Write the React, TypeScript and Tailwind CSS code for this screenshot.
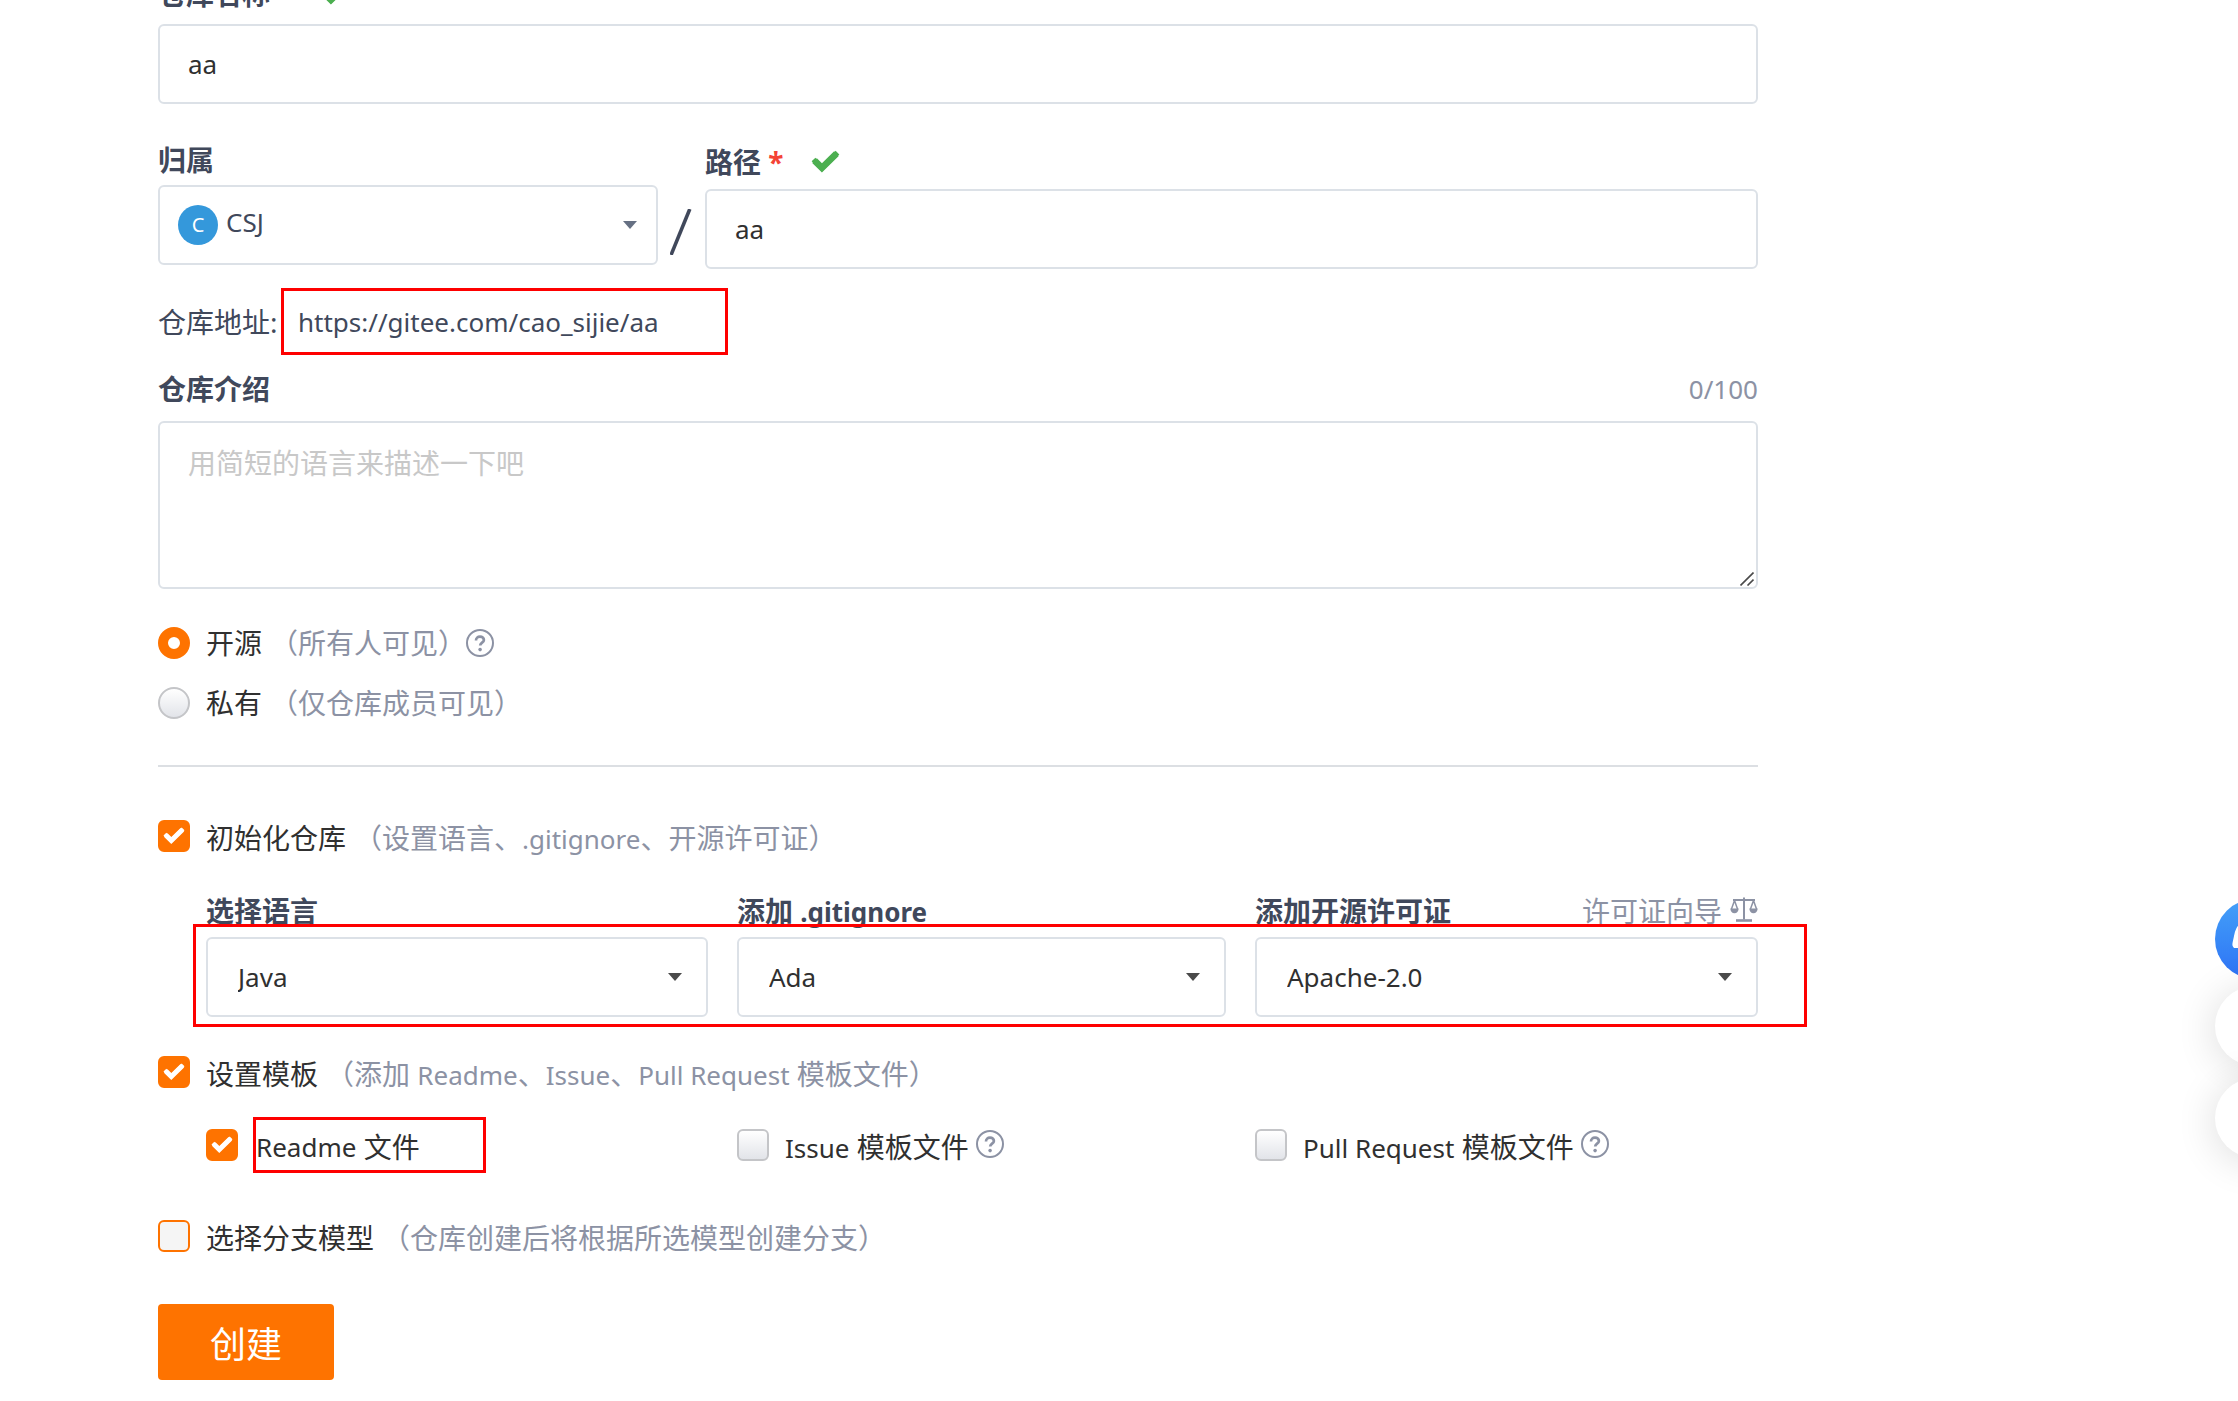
import { useState, type ReactNode } from "react";

function Latin({ children }: { children: ReactNode }) {
  return <span className="text-[26px]">{children}</span>;
}

function Tick({ className }: { className: string }) {
  return (
    <svg viewBox="0 0 22 18" className={`pointer-events-none shrink-0 ${className}`} fill="none" aria-hidden="true">
      <path d="M1.900 7.100 8.300 13.500 20.100 1.900" stroke="currentColor" strokeWidth="4" />
      <path d="M2.700 7.900 8.300 13.500 19.300 2.700" stroke="currentColor" strokeWidth="5" strokeLinecap="butt" />
    </svg>
  );
}

function HelpIcon({ className = "" }: { className?: string }) {
  return (
    <svg viewBox="0 0 28 28" className={`size-7 shrink-0 ${className}`} fill="none" stroke="#8c92a4" aria-hidden="true">
      <circle cx="14" cy="14" r="13" strokeWidth="2" />
      <path d="M10 11.400c0-2.200 1.700-3.700 4-3.700s3.900 1.400 3.900 3.200c0 2.700-3.700 2.800-3.700 5.600" strokeWidth="2.700" />
      <circle cx="14.100" cy="20.600" r="1.800" fill="#8c92a4" stroke="none" />
    </svg>
  );
}

function ScaleIcon() {
  return (
    <svg viewBox="0 0 28 26" className="h-[26px] w-7 shrink-0" fill="none" stroke="#8c92a4" strokeWidth="2" aria-hidden="true">
      <path d="M3 3h22M14 .5v22" />
      <path d="M6 23.500h16" strokeWidth="2.600" />
      <path d="M4.500 3.500 1.300 12.500M4.500 3.500 7.700 12.500M23.500 3.500 20.300 12.500M23.500 3.500 26.700 12.500" strokeWidth="1.500" />
      <path d="M.4 11.500h8.200c0 2.800-1.800 4.800-4.100 4.800S.4 14.300.4 11.500zM19.400 11.500h8.200c0 2.800-1.800 4.800-4.100 4.800s-4.100-2-4.100-4.800z" fill="#8c92a4" stroke="none" />
    </svg>
  );
}

function Caret({ className }: { className: string }) {
  return (
    <svg viewBox="0 0 14 8" className={`pointer-events-none absolute top-1/2 h-2 w-3.5 -translate-y-1/2 ${className}`} aria-hidden="true">
      <path d="M0 0h14L7 8z" fill="currentColor" />
    </svg>
  );
}

function Check({ id, checked = false, accent = false }: { id: string; checked?: boolean; accent?: boolean }) {
  const [on, setOn] = useState(checked);
  const off = accent ? "border-[#fe7300] bg-[#f5f5f5]" : "border-[#c4c5c8] bg-linear-to-b from-white to-[#e2e4e9]";
  return (
    <span className="relative flex size-8 shrink-0">
      <input
        id={id}
        type="checkbox"
        checked={on}
        onChange={(e) => setOn(e.target.checked)}
        className={`size-8 appearance-none rounded-md border-2 ${on ? "border-[#fe7300] bg-[#fe7300]" : off}`}
      />
      {on && <Tick className="absolute top-[7px] left-[5px] h-[18px] w-[22px] text-white" />}
    </span>
  );
}

function Radio({ id, checked, onChange }: { id: string; checked: boolean; onChange: () => void }) {
  return (
    <input
      id={id}
      type="radio"
      name="visibility"
      checked={checked}
      onChange={onChange}
      className={`size-8 shrink-0 appearance-none rounded-full ${
        checked ? "border-10 border-[#fe7300] bg-white" : "border-2 border-[#c4c5c8] bg-linear-to-b from-white to-[#e2e4e9]"
      }`}
    />
  );
}

const hint = "ml-2 text-[#8c92a4]";
const box = "h-20 w-full rounded-md border-2 border-[#dce1e7] bg-white";
const heading = "font-bold text-[#40485b]";

function Picker({ id, value }: { id: string; value: string }) {
  return (
    <div className="relative">
      <select id={id} defaultValue={value} className={`${box} appearance-none px-[30px] text-[26px]`}>
        <option>{value}</option>
      </select>
      <Caret className="right-[26px] text-[#4a4a4a]" />
    </div>
  );
}

export default function App() {
  const [open, setOpen] = useState(true);
  return (
    <div
      lang="zh-CN"
      className="min-h-screen overflow-hidden bg-white font-['Noto_Sans','Noto_Sans_CJK_SC',sans-serif] text-[28px] leading-10 text-[#303030]"
    >
      <form className="-mt-7 mr-[480px] ml-[158px] flex flex-col" onSubmit={(e) => e.preventDefault()}>
        <div className="flex h-[52px] items-center pb-2">
          <label htmlFor="name" className={heading}>仓库名称</label>
          <Tick className="ml-[50px] h-6 w-[29px] text-[#4caf50]" />
        </div>
        <input id="name" defaultValue="aa" className={`${box} px-7 text-[26px]`} />

        <div className="mt-9 flex">
          <div className="w-[500px] shrink-0">
            <label htmlFor="owner" className={`${heading} block h-[45px]`}>归属</label>
            <div className="relative text-[#40485b]">
              <select id="owner" defaultValue="CSJ" className={`${box} appearance-none pb-1.5 pl-[66px] text-[26px]`}>
                <option>CSJ</option>
              </select>
              <span className="pointer-events-none absolute top-5 left-5 flex size-10 items-center justify-center rounded-full bg-[#3498db] text-xl text-white">
                C
              </span>
              <Caret className="right-[21px] text-[#667083]" />
            </div>
          </div>
          <svg viewBox="0 0 23 46" className="mx-3 mt-[69px] h-[46px] w-[23px] shrink-0" aria-hidden="true">
            <path d="M1 46 19.800 0" stroke="#40485b" strokeWidth="3.600" />
          </svg>
          <div className="grow">
            <div className="flex h-[49px] items-center pb-1.5">
              <label htmlFor="path" className={heading}>
                路径 <span className="text-[#f44336]">*</span>
              </label>
              <Tick className="ml-7 h-6 w-[29px] text-[#4caf50]" />
            </div>
            <input id="path" defaultValue="aa" className={`${box} px-7 text-[26px]`} />
          </div>
        </div>

        <div className="mt-[19px] flex h-[67px] items-center text-[#40485b]">
          <span className="w-[123px] shrink-0 whitespace-nowrap">仓库地址:</span>
          <span className="flex h-full w-[447px] items-center border-3 border-[#fe0000] pl-3.5 text-[26px]">
            https://gitee.com/cao_sijie/aa
          </span>
        </div>

        <div className="mt-3.5 mb-3 flex items-center justify-between">
          <label htmlFor="intro" className={heading}>仓库介绍</label>
          <span className="text-[26px] text-[#8c92a4]">0/100</span>
        </div>
        <div className="relative">
          <textarea
            id="intro"
            placeholder="用简短的语言来描述一下吧"
            className="block h-[168px] w-full resize-none rounded-md border-2 border-[#dce1e7] px-7 py-5 placeholder:text-[#c8c8c8]"
          />
          <svg viewBox="0 0 14 14" className="pointer-events-none absolute right-1 bottom-[3px] size-3.5" aria-hidden="true">
            <path d="M.5 13.500 13.500.5M7.500 13.500 13.500 7.500" stroke="#4a4a4a" strokeWidth="1.600" />
          </svg>
        </div>

        <div className="mt-[34px] flex h-10 items-center">
          <Radio id="public" checked={open} onChange={() => setOpen(true)} />
          <label htmlFor="public" className="ml-4">
            开源<span className={hint}>（所有人可见）</span>
          </label>
          <HelpIcon />
        </div>
        <div className="mt-5 flex h-10 items-center">
          <Radio id="private" checked={!open} onChange={() => setOpen(false)} />
          <label htmlFor="private" className="ml-4">
            私有<span className={hint}>（仅仓库成员可见）</span>
          </label>
        </div>

        <hr className="mt-[42px] border-t-2 border-[#dcdfe3]" />

        <div className="mt-[49px] flex h-10 items-center">
          <Check id="init" checked />
          <label htmlFor="init" className="ml-4 pt-1">
            初始化仓库<span className={hint}>（设置语言、<Latin>.gitignore</Latin>、开源许可证）</span>
          </label>
        </div>

        <div className="relative mt-[35px] ml-12 grid grid-cols-[502fr_489fr_503fr] gap-x-[29px]">
          <div>
            <label htmlFor="language" className={`${heading} block h-[46px]`}>选择语言</label>
            <Picker id="language" value="Java" />
          </div>
          <div>
            <label htmlFor="ignore" className={`${heading} block h-[46px]`}>
              添加 <Latin>.gitignore</Latin>
            </label>
            <Picker id="ignore" value="Ada" />
          </div>
          <div>
            <div className="flex h-[46px] justify-between">
              <label htmlFor="license" className={heading}>添加开源许可证</label>
              <a href="#guide" className="flex gap-2 text-[#8c92a4]">
                许可证向导
                <span className="pt-1.5"><ScaleIcon /></span>
              </a>
            </div>
            <Picker id="license" value="Apache-2.0" />
          </div>
          <div className="pointer-events-none absolute top-[33px] -right-[49px] -bottom-2.5 -left-[13px] border-3 border-[#fe0000]" />
        </div>

        <div className="mt-[35px] flex h-10 items-center">
          <Check id="template" checked />
          <label htmlFor="template" className="ml-4 pt-1">
            设置模板
            <span className={hint}>
              （添加 <Latin>Readme</Latin>、<Latin>Issue</Latin>、<Latin>Pull Request</Latin> 模板文件）
            </span>
          </label>
        </div>

        <div className="mt-[25px] ml-12 grid h-14 grid-cols-[502fr_489fr_503fr] items-center gap-x-[29px]">
          <div className="flex items-center">
            <Check id="readme" checked />
            <label htmlFor="readme" className="ml-[15px] flex h-14 w-[233px] items-center border-3 border-[#fe0000] pt-1 whitespace-pre">
              <Latin>Readme</Latin> 文件
            </label>
          </div>
          <div className="flex items-center">
            <Check id="issue" />
            <label htmlFor="issue" className="mr-[7px] ml-4 pt-1">
              <Latin>Issue</Latin> 模板文件
            </label>
            <HelpIcon className="mb-0.5" />
          </div>
          <div className="flex items-center">
            <Check id="pr" />
            <label htmlFor="pr" className="mr-[7px] ml-4 pt-1">
              <Latin>Pull Request</Latin> 模板文件
            </label>
            <HelpIcon className="mb-0.5" />
          </div>
        </div>

        <div className="mt-[43px] flex h-10 items-center">
          <Check id="branch" accent />
          <label htmlFor="branch" className="ml-4 pt-1">
            选择分支模型<span className={hint}>（仓库创建后将根据所选模型创建分支）</span>
          </label>
        </div>

        <button type="submit" className="mt-12 h-[76px] w-44 rounded-sm bg-[#fe7300] pt-1.5 text-4xl text-white">
          创建
        </button>
      </form>

      <div className="fixed top-[899px] -right-[57px] flex flex-col gap-3">
        <button type="button" aria-label="客服" className="-mb-[5px] size-20 overflow-hidden rounded-full bg-linear-to-b from-[#45a0f8] to-[#2f72f5]">
          <svg viewBox="0 0 80 80" className="size-20" aria-hidden="true">
            <path d="M19 49c-3-3-1-6 0-12 2-12 10-19 21-19s20 8 21 19c1 6 3 9 0 12z" fill="#fff" />
          </svg>
        </button>
        <button type="button" aria-label="反馈" className="size-20 rounded-full bg-white shadow-[0_4px_40px_rgba(0,0,0,0.14)]" />
        <button type="button" aria-label="返回顶部" className="size-20 rounded-full bg-white shadow-[0_4px_40px_rgba(0,0,0,0.14)]" />
      </div>
    </div>
  );
}
